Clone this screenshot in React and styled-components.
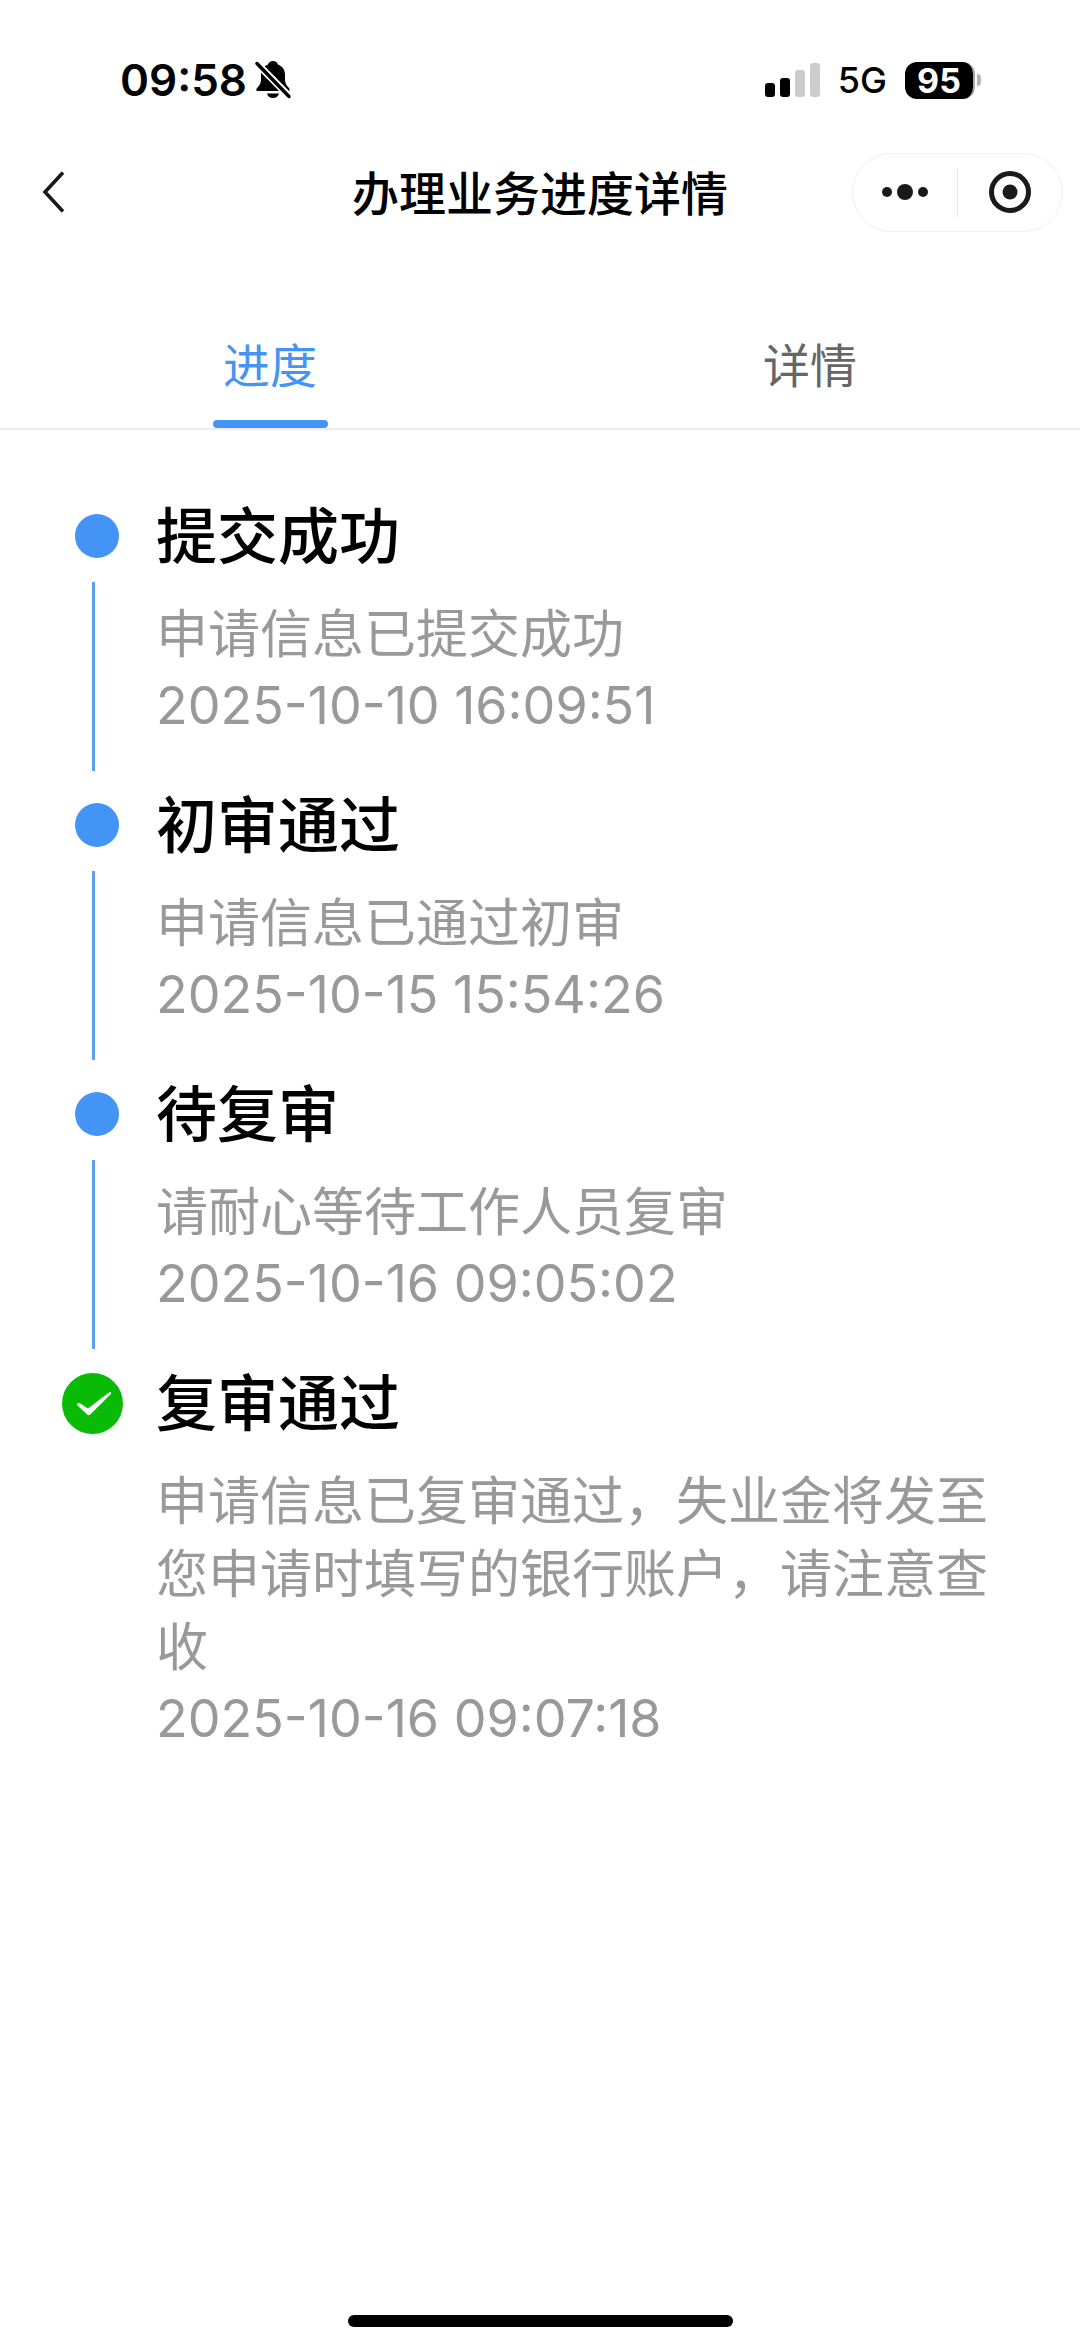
import React, { useState } from 'react';
import styled, { createGlobalStyle } from 'styled-components';

const steps = [
  {
    id: 1,
    title: '提交成功',
    desc: '申请信息已提交成功',
    time: '2025-10-10 16:09:51',
  },
  {
    id: 2,
    title: '初审通过',
    desc: '申请信息已通过初审',
    time: '2025-10-15 15:54:26',
  },
  {
    id: 3,
    title: '待复审',
    desc: '请耐心等待工作人员复审',
    time: '2025-10-16 09:05:02',
  },
  {
    id: 4,
    title: '复审通过',
    desc: '申请信息已复审通过，失业金将发至您申请时填写的银行账户，请注意查收',
    time: '2025-10-16 09:07:18',
    done: true,
  },
];

const tabs = ['进度', '详情'];

export default function App() {
  const [active, setActive] = useState(tabs[0]);

  return (
    <>
      <GlobalStyle />
      <Page>
        <StatusBar>
          <StatusGroup>
            <Clock>09:58</Clock>
            <BellOff />
          </StatusGroup>
          <StatusGroup>
            <Signal />
            <Network>5G</Network>
            <Battery>
              <BatteryLevel>95</BatteryLevel>
              <BatteryTip />
            </Battery>
          </StatusGroup>
        </StatusBar>

        <NavBar>
          <BackButton type='button' aria-label='返回'>
            <svg width='24' height='44' viewBox='0 0 24 44' fill='none'>
              <path d='M21 2.500 3 22 21 41.500' stroke='#1a1a1a' strokeWidth='3.6' />
            </svg>
          </BackButton>
          <NavTitle>办理业务进度详情</NavTitle>
          <Capsule>
            <CapsuleButton type='button' aria-label='更多'>
              <svg width='48' height='18' viewBox='0 0 48 18' fill='#1a1a1a'>
                <circle cx='6' cy='9' r='5' />
                <circle cx='24' cy='9' r='8' />
                <circle cx='42' cy='9' r='5' />
              </svg>
            </CapsuleButton>
            <CapsuleLine />
            <CapsuleButton type='button' aria-label='关闭'>
              <svg width='44' height='44' viewBox='0 0 44 44'>
                <circle
                  cx='22'
                  cy='22'
                  r='18.5'
                  fill='none'
                  stroke='#1a1a1a'
                  strokeWidth='5'
                />
                <circle cx='22' cy='22' r='7.5' fill='#1a1a1a' />
              </svg>
            </CapsuleButton>
          </Capsule>
        </NavBar>

        <Tabs role='tablist'>
          {tabs.map((tab) => (
            <Tab
              key={tab}
              type='button'
              role='tab'
              aria-selected={tab === active}
              $active={tab === active}
              onClick={() => setActive(tab)}
            >
              {tab}
            </Tab>
          ))}
        </Tabs>

        <Timeline>
          {steps.map((step) => (
            <Step key={step.id}>
              <Rail>
                <Marker $done={step.done}>
                  {step.done ? <CheckCircle /> : <Dot />}
                </Marker>
                {!step.done && <RailLine />}
              </Rail>
              <StepBody>
                <StepTitle>{step.title}</StepTitle>
                <StepText>{step.desc}</StepText>
                <StepTime>{step.time}</StepTime>
              </StepBody>
            </Step>
          ))}
        </Timeline>

        <HomeIndicator />
      </Page>
    </>
  );
}

function BellOff() {
  return (
    <svg width='36' height='40' viewBox='0 0 36 40'>
      <path
        d='M18 1c-2.6 0-4.400 1.500-4.900 3.400C8.300 6 6 10 6 15v4c0 4-1.200 6-3.500 8.500C.6 29.600 1 31 3 31h30c2 0 2.400-1.400.5-3.500C31.200 25 30 23 30 19v-4c0-5-2.300-9-7.100-10.600C22.400 2.500 20.600 1 18 1z'
        fill='#000'
      />
      <path d='M12 33.500h12c-.8 3-3 4.500-6 4.500s-5.200-1.500-6-4.500z' fill='#000' />
      <path d='M1 2.500 34 36' stroke='#fff' strokeWidth='7' />
      <path
        d='M2 3.500 34 36.500'
        stroke='#000'
        strokeWidth='3.4'
        strokeLinecap='round'
      />
    </svg>
  );
}

function Signal() {
  return (
    <svg width='55' height='36' viewBox='0 0 55 36'>
      <rect x='0' y='21' width='10' height='14' rx='3' fill='#000' />
      <rect x='15' y='16' width='10' height='19' rx='3' fill='#000' />
      <rect x='30' y='8' width='10' height='27' rx='3' fill='#ccc' />
      <rect x='45' y='1' width='10' height='34' rx='3' fill='#ccc' />
    </svg>
  );
}

function CheckCircle() {
  return (
    <svg width='61' height='61' viewBox='0 0 61 61'>
      <circle cx='30.5' cy='30.5' r='30.5' fill='#09bb07' />
      <path
        d='M15.300 32.300c-.9-1.200.7-3 2.200-2.200l8.500 5.400L47.300 19.300c1.300-.9 2.700.5 1.600 1.700L28.500 41.200c-1.300 1.300-2.600 1.200-3.700 0z'
        fill='#fff'
      />
    </svg>
  );
}

const GlobalStyle = createGlobalStyle`
  * {
    box-sizing: border-box;
  }

  body {
    margin: 0;
    background-color: #fff;
    font-family: Inter, 'Noto Sans CJK SC', sans-serif;
  }

  button {
    padding: 0;
    border: none;
    background: none;
    font-family: inherit;
    cursor: pointer;
  }

  svg {
    display: block;
  }
`;

const Page = styled.div`
  display: flex;
  flex-direction: column;
  min-height: 100vh;
`;

const StatusBar = styled.div`
  display: flex;
  justify-content: space-between;
  align-items: center;
  height: 128px;
  padding: 32px 99px 0 120px;
`;

const StatusGroup = styled.div`
  display: flex;
  align-items: center;
  gap: 8px;
`;

const Clock = styled.span`
  font-size: 44px;
  font-weight: 600;
`;

const Network = styled.span`
  margin: 0 10px;
  font-size: 36px;
  font-weight: 500;
`;

const Battery = styled.div`
  display: flex;
  align-items: center;
  gap: 2px;
`;

const BatteryLevel = styled.span`
  width: 70px;
  border-right: 2px solid #aaa;
  border-radius: 12px;
  background-color: #000;
  color: #fff;
  font-size: 34px;
  font-weight: 700;
  line-height: 37px;
  text-align: center;
`;

const BatteryTip = styled.span`
  width: 4px;
  height: 12px;
  border-radius: 0 4px 4px 0;
  background-color: #b5b5b5;
`;

const NavBar = styled.header`
  display: grid;
  grid-template-columns: 1fr auto 1fr;
  align-items: center;
  height: 128px;
  padding: 0 17px;
`;

const BackButton = styled.button`
  justify-self: start;
  padding: 0 25px;
`;

const NavTitle = styled.h1`
  margin: 0;
  padding-bottom: 4px;
  font-size: 47px;
  font-weight: 500;
`;

const Capsule = styled.div`
  display: flex;
  align-items: center;
  justify-self: end;
  width: 211px;
  height: 79px;
  border: 1px solid #f0f0f0;
  border-radius: 40px;
`;

const CapsuleButton = styled.button`
  display: flex;
  flex: 1;
  align-items: center;
  justify-content: center;
  height: 100%;
`;

const CapsuleLine = styled.span`
  width: 1px;
  height: 49px;
  background-color: #e5e5e5;
`;

const Tabs = styled.div`
  display: flex;
  margin-top: 44px;
  border-bottom: 2px solid #ededed;
`;

const Tab = styled.button`
  display: flex;
  flex: 1;
  flex-direction: column;
  align-items: center;
  gap: 19px;
  padding-top: 31px;
  color: ${({ $active }) => ($active ? '#4394f4' : '#666')};
  font-size: 47px;
  line-height: 70px;

  &::after {
    content: '';
    width: 115px;
    height: 8px;
    border-radius: 4px;
    background-color: ${({ $active }) => ($active ? '#4394f4' : 'transparent')};
  }
`;

const Timeline = styled.ol`
  margin: 0;
  padding: 60px 80px 0 62px;
  list-style: none;
`;

const Step = styled.li`
  display: flex;
`;

const Rail = styled.div`
  display: flex;
  flex-direction: column;
  flex-shrink: 0;
  width: 94px;
`;

const Marker = styled.div`
  display: flex;
  align-items: center;
  height: 92px;
  padding-left: ${({ $done }) => ($done ? '0' : '13px')};
`;

const Dot = styled.span`
  width: 44px;
  height: 44px;
  border-radius: 50%;
  background-color: #4394f4;
`;

const RailLine = styled.span`
  flex: 1;
  width: 3px;
  margin: 0 0 8px 30px;
  background-color: #5b9fee;
`;

const StepBody = styled.div`
  flex: 1;
  padding-bottom: 39px;
`;

const StepTitle = styled.h2`
  margin: 0 0 14px;
  font-size: 61px;
  font-weight: 500;
  line-height: 94px;
`;

const StepText = styled.p`
  margin: 0;
  color: #999;
  font-size: 52px;
  line-height: 73px;
`;

const StepTime = styled.time`
  display: block;
  color: #999;
  font-size: 52px;
  line-height: 69px;
`;

const HomeIndicator = styled.div`
  width: 385px;
  height: 12px;
  margin: auto auto 20px;
  border-radius: 6px;
  background-color: #000;
`;
